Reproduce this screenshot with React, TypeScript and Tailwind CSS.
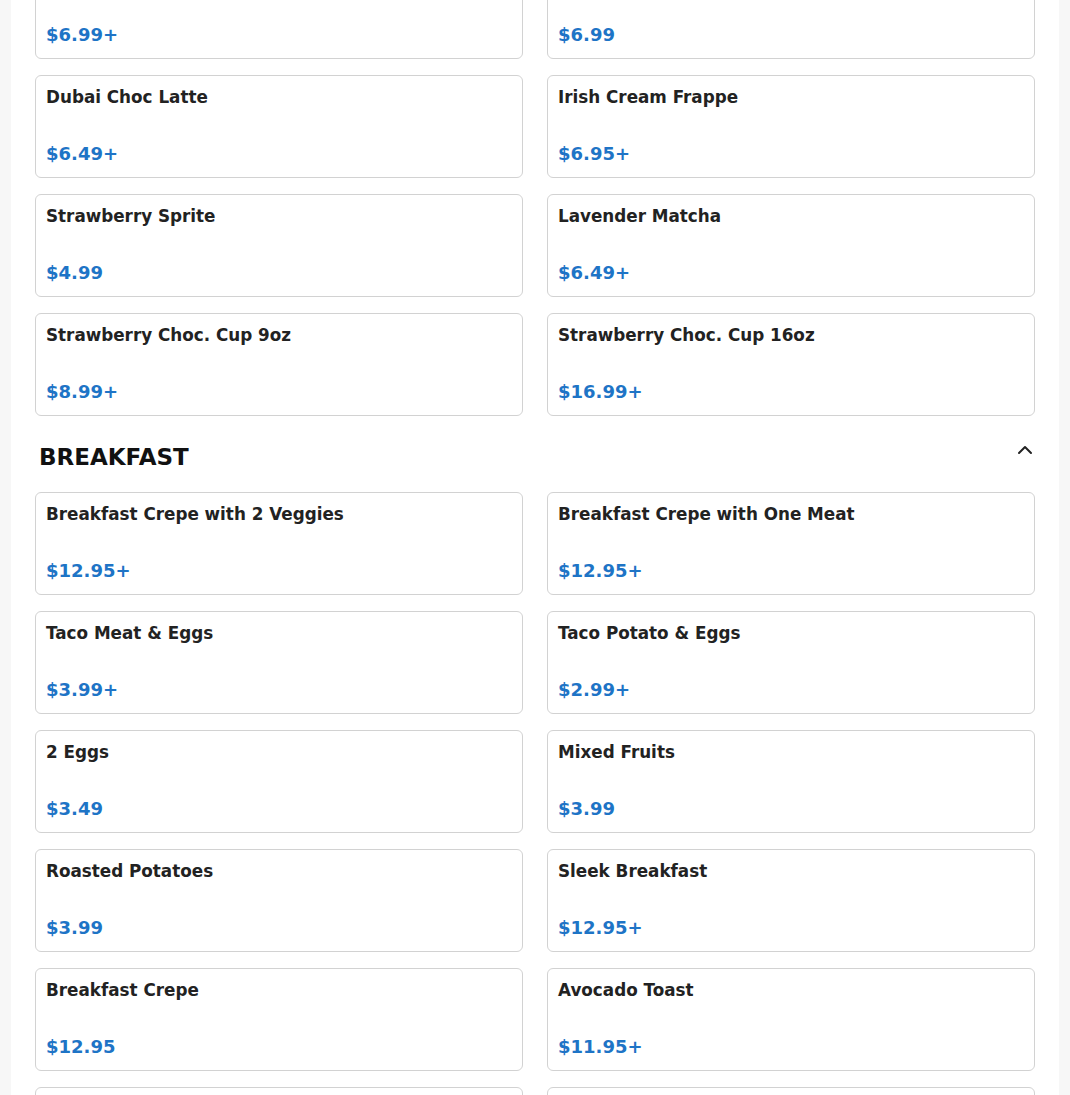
import React from 'react';
import { ChevronUp } from 'lucide-react';

type Item = { name: string; price: string };

const drinks: Item[] = [
  { name: 'Pistachio Latte', price: '$6.99+' },
  { name: 'Matcha Frappe', price: '$6.99' },
  { name: 'Dubai Choc Latte', price: '$6.49+' },
  { name: 'Irish Cream Frappe', price: '$6.95+' },
  { name: 'Strawberry Sprite', price: '$4.99' },
  { name: 'Lavender Matcha', price: '$6.49+' },
  { name: 'Strawberry Choc. Cup 9oz', price: '$8.99+' },
  { name: 'Strawberry Choc. Cup 16oz', price: '$16.99+' },
];

const breakfast: Item[] = [
  { name: 'Breakfast Crepe with 2 Veggies', price: '$12.95+' },
  { name: 'Breakfast Crepe with One Meat', price: '$12.95+' },
  { name: 'Taco Meat & Eggs', price: '$3.99+' },
  { name: 'Taco Potato & Eggs', price: '$2.99+' },
  { name: '2 Eggs', price: '$3.49' },
  { name: 'Mixed Fruits', price: '$3.99' },
  { name: 'Roasted Potatoes', price: '$3.99' },
  { name: 'Sleek Breakfast', price: '$12.95+' },
  { name: 'Breakfast Crepe', price: '$12.95' },
  { name: 'Avocado Toast', price: '$11.95+' },
  { name: 'Breakfast Burrito', price: '$9.95+' },
  { name: 'French Toast', price: '$8.95' },
];

function Card({ item }: { item: Item }) {
  return (
    <div className="flex flex-col rounded-[6px] border border-[#d2d2d2] bg-white px-[10px] pb-[10px] pt-[11px]">
      <div className="text-[16.8px] font-bold leading-[20px] text-[#222]">{item.name}</div>
      <div className="mt-[33px] text-[18px] font-bold leading-[27px] text-[#1e74c6]">{item.price}</div>
    </div>
  );
}

function Grid({ items }: { items: Item[] }) {
  return (
    <div className="grid grid-cols-2 gap-x-6 gap-y-4">
      {items.map((it) => (
        <Card key={it.name} item={it} />
      ))}
    </div>
  );
}

export default function App() {
  return (
    <div className="min-h-screen bg-[#f7f7f7] font-['DejaVu_Sans',sans-serif]">
      <div className="mx-[11px] h-[1095px] overflow-hidden bg-white px-6">
        <div className="-mt-[44px]">
          <Grid items={drinks} />
          <div className="mb-[18px] mt-[22px] flex items-start justify-between pl-1 pr-0">
            <h2 className="mt-[3px] text-[23px] font-bold leading-[33px] text-[#111]">BREAKFAST</h2>
            <ChevronUp size={24} strokeWidth={2} className="-mr-[2px] text-[#222]" />
          </div>
          <Grid items={breakfast} />
        </div>
      </div>
    </div>
  );
}
